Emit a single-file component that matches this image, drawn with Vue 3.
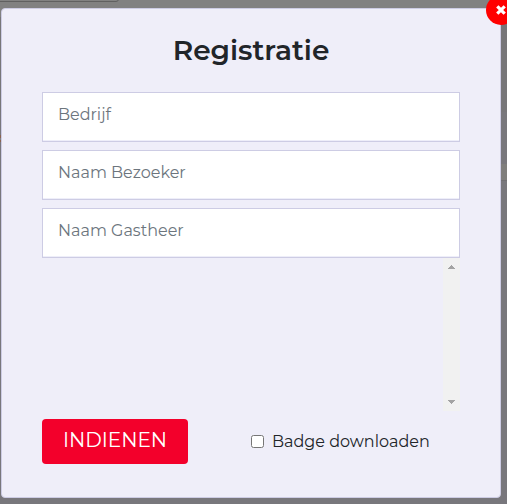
<script setup>
import {ref} from 'vue'
const emit = defineEmits(['submit', 'close'])
const fields = ref([
  {name: 'bedrijf', label: 'Bedrijf', value: ''},
  {name: 'bezoeker', label: 'Naam Bezoeker', value: ''},
  {name: 'gastheer', label: 'Naam Gastheer', value: ''}
]);
const badge = ref(false);
function submitForm(){
  emit('submit', {fields: fields.value, badge: badge.value})
}
function closeThis(){
  emit('close');
}
</script>

<template>
  <div class="outer">
    <div class="page-top"></div>
    <div class="page-row"></div>
    <div class="page-mark"></div>
    <form class="modal" @submit.prevent="submitForm">
      <button type="button" class="close" @click="closeThis">
        <svg width="10" height="10" viewBox="0 0 10 10">
          <path d="M2.4 2.4L7.6 7.6M7.6 2.4L2.4 7.6" stroke="#fff" stroke-width="3.2" stroke-linecap="square" />
        </svg>
      </button>
      <h2>Registratie</h2>
      <div class="fields">
        <input v-for="f in fields" :key="f.name" :class="f.name" type="text" v-model="f.value" :placeholder="f.label">
      </div>
      <div class="list">
        <div class="scrollbar">
          <svg width="7" height="4" viewBox="0 0 7 4" shape-rendering="crispEdges"><path d="M3 0h1v1h1v1h1v1h1v1H0V3h1V2h1V1h1z" fill="#a3a3a3" /></svg>
          <svg width="7" height="4" viewBox="0 0 7 4" shape-rendering="crispEdges"><path d="M0 0h7v1H6v1H5v1H4v1H3V3H2V2H1V1H0z" fill="#a3a3a3" /></svg>
        </div>
      </div>
      <div class="actions">
        <button type="submit" class="submit">INDIENEN</button>
        <label>
          <input type="checkbox" v-model="badge">
          <span>Badge downloaden</span>
        </label>
      </div>
    </form>
  </div>
</template>

<style>
body{
  overflow:hidden;
}
</style>

<style scoped>
*{
  box-sizing:border-box;
}
.outer{
  position:relative;
  width:507px;
  height:504px;
  padding:8px 0 0 1px;
  overflow:hidden;
  background:linear-gradient(#818181 0 17px, #777679 17px 112px, #78777c 112px);
  font-family:Montserrat, Inter, sans-serif;
  font-weight:400;
}
/* bits of the dimmed page behind the modal */
.page-top{
  position:absolute;
  top:-8px;
  left:-5px;
  width:124px;
  height:10px;
  border:1px solid #606060;
  border-radius:3px;
}
.page-row{
  position:absolute;
  top:164px;
  right:0;
  width:6px;
  height:17px;
  background:#7f7e7c;
  border-bottom:1px solid #706f72;
}
.page-mark{
  position:absolute;
  top:135px;
  left:0;
  width:1px;
  height:7px;
  background:linear-gradient(#8c6450 0 3px, #818181 3px 5px, #8c6450 5px);
}
.modal{
  position:relative;
  width:500px;
  height:490px;
  padding:0 40px;
  background:#efeef9;
  border:1px solid #cdcce4;
  border-radius:4px;
}
.close{
  position:absolute;
  top:-14px;
  right:-16px;
  display:flex;
  align-items:center;
  justify-content:center;
  width:30px;
  height:30px;
  padding:0;
  border:0;
  border-radius:50%;
  background:#f00;
}
h2{
  height:83px;
  margin:0;
  padding-top:24px;
  text-align:center;
  color:#212529;
  font-size:28px;
  font-weight:600;
  line-height:34px;
}
.fields{
  display:flex;
  flex-direction:column;
  gap:8px;
}
.fields input{
  width:100%;
  height:50px;
  padding:0 15px 5px;
  border:1px solid #cdcce4;
  box-shadow:inset 0 -1px 0 #eeeef9;
  border-radius:0;
  outline:0;
  background:#fff;
  color:#212529;
  font:inherit;
  font-size:16px;
}
.fields input::placeholder{
  color:#6c757d;
  opacity:1;
}
.list{
  display:flex;
  justify-content:flex-end;
  height:153px;
}
.scrollbar{
  display:flex;
  flex-direction:column;
  align-items:center;
  justify-content:space-between;
  width:17px;
  padding:7px 0;
  background:#f1f1f1;
}
.actions{
  display:flex;
  align-items:center;
  margin-top:8px;
}
.submit{
  width:146px;
  height:45px;
  padding:0 0 4px;
  border:0;
  border-radius:4px;
  background:#f3002b;
  color:#fff;
  font:inherit;
  font-size:20px;
}
label{
  display:flex;
  align-items:center;
  margin-left:63px;
  color:#212529;
  font-size:16px;
}
label input{
  width:13px;
  height:13px;
  margin:0 8px 0 0;
}
label span{
  white-space:nowrap;
}
</style>
